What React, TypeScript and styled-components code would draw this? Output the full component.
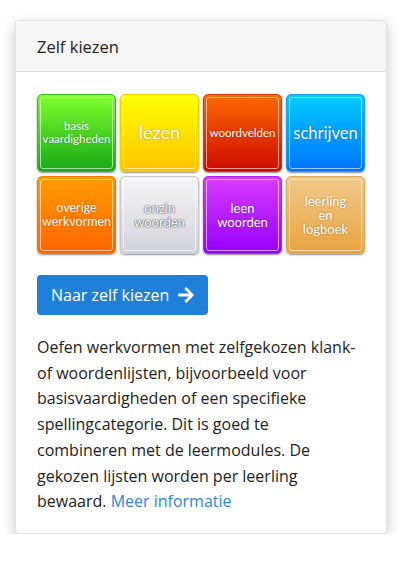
import React from "react";
import styled, { createGlobalStyle } from "styled-components";

const GlobalStyle = createGlobalStyle`
  body {
    margin: 0;
    background: #fff;
    font-family: "Open Sans", "Noto Sans", sans-serif;
    color: #212529;
  }
`;

type TileDef = {
  label: string[];
  top: string;
  bottom: string;
  edge: string;
  size: number;
  dark?: boolean;
};

const tiles: TileDef[] = [
  { label: ["basis", "vaardigheden"], top: "#80ff2e", bottom: "#17a817", edge: "#3cba1c", size: 11.5 },
  { label: ["lezen"], top: "#ffff00", bottom: "#ffc200", edge: "#f0d000", size: 18 },
  { label: ["woordvelden"], top: "#ff6a00", bottom: "#cc0a00", edge: "#d83a00", size: 11.5 },
  { label: ["schrijven"], top: "#00ccff", bottom: "#0074ff", edge: "#1a9cff", size: 16.5 },
  { label: ["overige", "werkvormen"], top: "#ff9c00", bottom: "#ff6400", edge: "#f07c00", size: 12.5 },
  { label: ["onzin", "woorden"], top: "#f5f5f5", bottom: "#d2d2da", edge: "#c8c8d0", size: 13, dark: true },
  { label: ["leen", "woorden"], top: "#d83cff", bottom: "#9600ff", edge: "#b020ff", size: 13 },
  { label: ["leerling", "en", "logboek"], top: "#f0c98c", bottom: "#e8a33e", edge: "#dca860", size: 13 },
];

const App = (): JSX.Element => {
  return (
    <>
      <GlobalStyle />
      <Card>
        <Header>Zelf kiezen</Header>
        <Body>
          <Grid>
            {tiles.map((t) => (
              <Tile key={t.label.join(" ")} $top={t.top} $bottom={t.bottom} $edge={t.edge}>
                <TileLabel $size={t.size} $dark={t.dark}>
                  {t.label.map((l) => (
                    <span key={l}>{l}</span>
                  ))}
                </TileLabel>
              </Tile>
            ))}
          </Grid>
          <Button>
            Naar zelf kiezen
            <svg width="16" height="18" viewBox="0 0 448 512" aria-hidden="true">
              <path
                fill="#fff"
                d="M190.5 66.9l22.2-22.2c9.4-9.4 24.6-9.4 33.9 0L441 239c9.4 9.4 9.4 24.6 0 33.9L246.6 467.3c-9.4 9.4-24.6 9.4-33.9 0l-22.2-22.2c-9.5-9.5-9.3-25 .4-34.3L311.4 296H24c-13.3 0-24-10.7-24-24v-32c0-13.3 10.7-24 24-24h287.4L190.9 101.2c-9.8-9.3-10-24.8-.4-34.3z"
              />
            </svg>
          </Button>
          <Text>
            Oefen werkvormen met zelfgekozen klank- of woordenlijsten, bijvoorbeeld voor
            basisvaardigheden of een specifieke spellingcategorie. Dit is goed te combineren
            met de leermodules. De gekozen lijsten worden per leerling bewaard.{" "}
            <a href="#">Meer informatie</a>
          </Text>
        </Body>
      </Card>
    </>
  );
};

const Card = styled.div`
  margin: 20px 0 0 15px;
  width: 370px;
  background: #fff;
  border: 1px solid #e2e2e2;
  border-radius: 4px;
  box-shadow: 0 5px 14px rgba(0, 0, 0, 0.22);
  overflow: hidden;
`;

const Header = styled.div`
  background: #f6f6f6;
  border-bottom: 1px solid #dcdcdc;
  height: 51px;
  box-sizing: border-box;
  padding: 0 21px;
  display: flex;
  align-items: center;
  font-size: 16.5px;
  color: #222;
`;

const Body = styled.div`
  padding: 22px 21px 18px;
`;

const Grid = styled.div`
  display: grid;
  grid-template-columns: repeat(4, 1fr);
  gap: 4px;
`;

const Tile = styled.div<{ $top: string; $bottom: string; $edge: string }>`
  height: 78px;
  border-radius: 5px;
  border: 1px solid ${(p) => p.$edge};
  background: linear-gradient(${(p) => p.$top}, ${(p) => p.$bottom});
  box-shadow: 0 1px 2px rgba(0, 0, 0, 0.45);
  padding: 2px;
  box-sizing: border-box;
  display: flex;
`;

const TileLabel = styled.div<{ $size: number; $dark?: boolean }>`
  flex: 1;
  border: 1px solid rgba(255, 255, 255, 0.6);
  border-radius: 3px;
  display: flex;
  flex-direction: column;
  align-items: center;
  justify-content: center;
  font-family: Lato, "Open Sans", sans-serif;
  font-size: ${(p) => p.$size}px;
  line-height: 1.1;
  color: #fff;
  text-align: center;
  text-shadow: ${(p) =>
    p.$dark
      ? "0 0 2px rgba(60,60,70,0.9), 0 0 1px #555"
      : "0 0 2px rgba(0,0,0,0.35)"};
`;

const Button = styled.button`
  margin-top: 21px;
  display: inline-flex;
  align-items: center;
  gap: 9px;
  height: 40px;
  padding: 0 14px;
  border: none;
  border-radius: 4px;
  background: #1f80d9;
  color: #fff;
  font-family: "Open Sans", "Noto Sans", sans-serif;
  font-size: 16px;
  cursor: pointer;
`;

const Text = styled.p`
  margin: 20px 0 0;
  max-width: 320px;
  font-size: 16px;
  line-height: 25.7px;
  color: #222;

  a {
    color: #2f86e0;
    text-decoration: none;
  }
`;

export default App;
